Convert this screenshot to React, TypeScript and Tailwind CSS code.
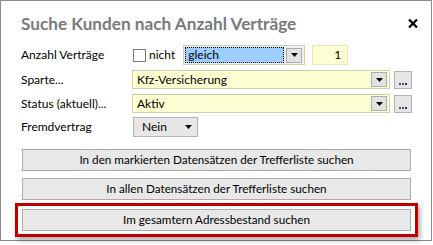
import React from 'react'

const font = { fontFamily: 'Lato, "Noto Sans", sans-serif' }

function Arrow() {
  return (
    <svg width="7" height="4" viewBox="0 0 7 4">
      <path d="M0 0 H7 L3.5 4 Z" fill="#000" />
    </svg>
  )
}

function DropButton() {
  return (
    <div className="w-[16px] h-[15px] bg-[#e3e3e3] border border-[#adadad] flex items-center justify-center">
      <Arrow />
    </div>
  )
}

function DotsButton() {
  return (
    <div className="ml-[4px] w-[18px] h-[18px] bg-[#e6e6e6] border border-[#b4b4b4] flex items-end justify-center pb-[3px]">
      <div className="flex gap-[1px]">
        <span className="w-[2px] h-[2px] bg-[#9b2b8f]" />
        <span className="w-[2px] h-[2px] bg-[#2b6b2b]" />
        <span className="w-[2px] h-[2px] bg-[#2b2b9b]" />
      </div>
    </div>
  )
}

function ComboField({ value }: { value: string }) {
  return (
    <div className="flex items-center">
      <div className="w-[258px] h-[19px] bg-[#ffffd4] border border-[#cfcfa8] flex items-center justify-between pl-[4px] pr-[2px]">
        <span className="text-[12px] text-black leading-none">{value}</span>
        <DropButton />
      </div>
      <DotsButton />
    </div>
  )
}

function ActionButton({ label }: { label: string }) {
  return (
    <div className="w-[389px] h-[22px] bg-[#e8e8e8] border border-[#acacac] flex items-center justify-center text-[11.7px] text-black">
      {label}
    </div>
  )
}

export default function App() {
  return (
    <div className="w-[433px] h-[245px] bg-white overflow-hidden" style={font}>
      <div className="w-[432px] h-[241px] border border-[#8a8a8a] relative pl-[20px] pt-[12px]">
        <div className="flex items-center justify-between pr-[13px] h-[22px]">
          <h1 className="text-[17.2px] font-bold text-[#7a7a7a] leading-none">Suche Kunden nach Anzahl Verträge</h1>
          <svg width="10" height="9" viewBox="0 0 10 9" className="mt-[-2px]">
            <path d="M1 0.5 L9 8.5 M9 0.5 L1 8.5" stroke="#000" strokeWidth="2.2" />
          </svg>
        </div>

        <div className="mt-[10px] flex items-center h-[20px]">
          <span className="w-[112px] text-[12px] text-black">Anzahl Verträge</span>
          <span className="w-[13px] h-[13px] border border-[#7a7a7a] bg-white" />
          <span className="ml-[3px] text-[12px] text-black">nicht</span>
          <div className="ml-[8px] w-[122px] h-[20px] bg-[#f0f0f0] border border-[#cfcfa8] flex items-center pl-[1px] pr-[2px]">
            <div className="flex-1 h-[16px] bg-[#9ccfff] border border-dotted border-black flex items-center pl-[2px] text-[12px] text-black">
              gleich
            </div>
            <div className="ml-[2px]">
              <DropButton />
            </div>
          </div>
          <div className="ml-[7px] w-[36px] h-[20px] bg-[#ffffd4] border border-[#e4e4c4] flex items-center justify-end pr-[6px] text-[12px] text-black">
            1
          </div>
        </div>

        <div className="mt-[5px] flex items-center h-[19px]">
          <span className="w-[111px] text-[12px] text-black">Sparte...</span>
          <ComboField value="Kfz-Versicherung" />
        </div>

        <div className="mt-[5px] flex items-center h-[19px]">
          <span className="w-[111px] text-[12px] text-black">Status (aktuell)...</span>
          <ComboField value="Aktiv" />
        </div>

        <div className="mt-[4px] flex items-center h-[20px]">
          <span className="w-[112px] text-[12px] text-black">Fremdvertrag</span>
          <div className="w-[65px] h-[20px] bg-[#e6e6e6] border border-[#b4b4b4] flex items-center pl-[8px] gap-[18px] text-[12px] text-black">
            <span>Nein</span>
            <Arrow />
          </div>
        </div>

        <div className="mt-[12px] flex flex-col gap-[7px] pl-[1px]">
          <ActionButton label="In den markierten Datensätzen der Trefferliste suchen" />
          <ActionButton label="In allen Datensätzen der Trefferliste suchen" />
        </div>

        <div className="mt-[3px] ml-[-6px] w-[403px] h-[34px] border-[3px] border-[#c00000] shadow-[2px_3px_5px_rgba(0,0,0,0.35)] flex items-center justify-center">
          <ActionButton label="Im gesamtern Adressbestand suchen" />
        </div>
      </div>
    </div>
  )
}
